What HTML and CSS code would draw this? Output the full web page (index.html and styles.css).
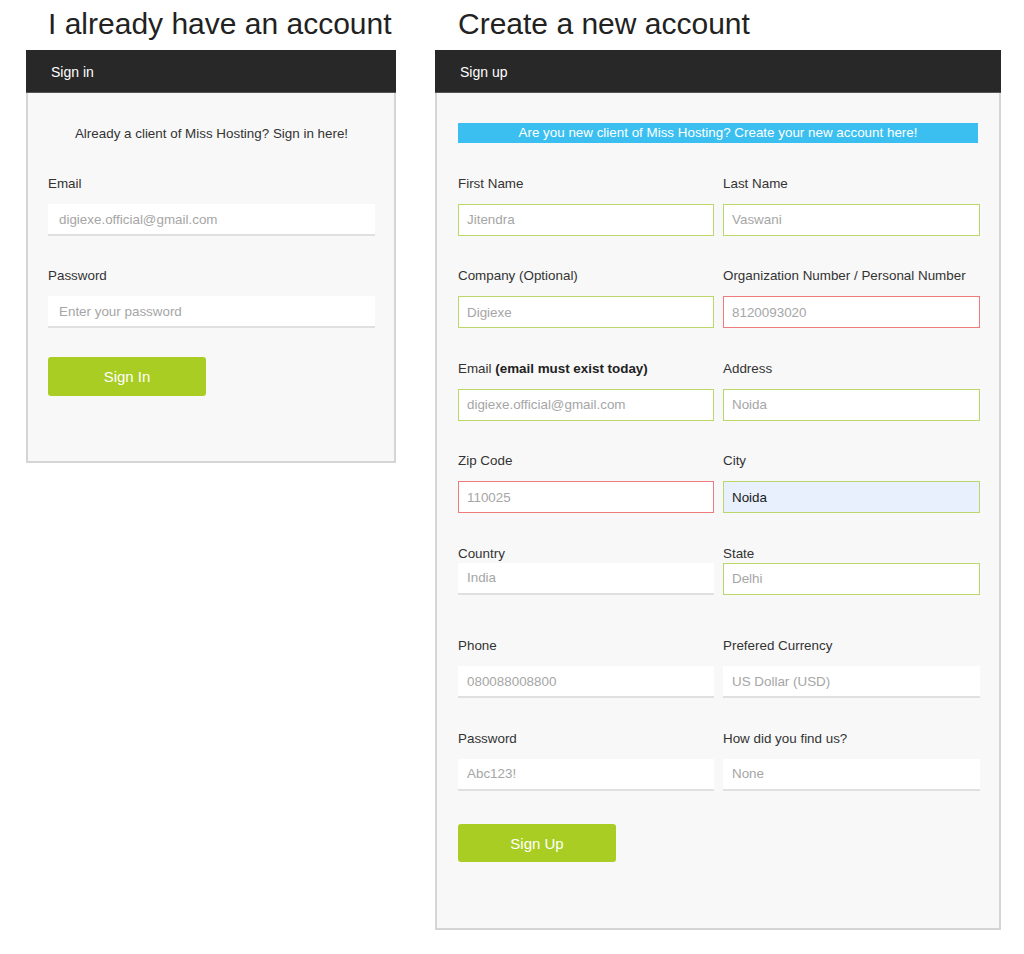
FILE: index.html
```html
<!DOCTYPE html>
<html lang="en">
<head>
<meta charset="utf-8">
<title>Account</title>
<link rel="stylesheet" href="styles.css">
</head>
<body>
<div class="page">
  <section class="col col-left">
    <h1 class="title">I already have an account</h1>
    <div class="panel">
      <div class="panel-head">Sign in</div>
      <div class="panel-body body-left">
        <p class="intro">Already a client of Miss Hosting? Sign in here!</p>
        <div class="field">
          <label class="label">Email</label>
          <input class="input plain wide-pad" type="text" placeholder="digiexe.official@gmail.com">
        </div>
        <div class="field">
          <label class="label">Password</label>
          <input class="input plain wide-pad" type="text" placeholder="Enter your password">
        </div>
        <button class="btn btn-left" type="button">Sign In</button>
      </div>
    </div>
  </section>

  <section class="col col-right">
    <h1 class="title">Create a new account</h1>
    <div class="panel">
      <div class="panel-head">Sign up</div>
      <div class="panel-body body-right">
        <div class="banner">Are you new client of Miss Hosting? Create your new account here!</div>
        <div class="grid">
          <div class="field">
            <label class="label">First Name</label>
            <input class="input ok" type="text" placeholder="Jitendra">
          </div>
          <div class="field">
            <label class="label">Last Name</label>
            <input class="input ok" type="text" placeholder="Vaswani">
          </div>
          <div class="field">
            <label class="label">Company (Optional)</label>
            <input class="input ok" type="text" placeholder="Digiexe">
          </div>
          <div class="field">
            <label class="label">Organization Number / Personal Number</label>
            <input class="input err" type="text" placeholder="8120093020">
          </div>
          <div class="field">
            <label class="label">Email <b>(email must exist today)</b></label>
            <input class="input ok" type="text" placeholder="digiexe.official@gmail.com">
          </div>
          <div class="field">
            <label class="label">Address</label>
            <input class="input ok" type="text" placeholder="Noida">
          </div>
          <div class="field">
            <label class="label">Zip Code</label>
            <input class="input err" type="text" placeholder="110025">
          </div>
          <div class="field">
            <label class="label">City</label>
            <input class="input ok filled" type="text" value="Noida">
          </div>
          <div class="field tight">
            <label class="label">Country</label>
            <input class="input plain" type="text" placeholder="India">
          </div>
          <div class="field tight">
            <label class="label">State</label>
            <input class="input ok" type="text" placeholder="Delhi">
          </div>
          <div class="field">
            <label class="label">Phone</label>
            <input class="input plain" type="text" placeholder="080088008800">
          </div>
          <div class="field">
            <label class="label">Prefered Currency</label>
            <input class="input plain" type="text" placeholder="US Dollar (USD)">
          </div>
          <div class="field">
            <label class="label">Password</label>
            <input class="input plain" type="text" placeholder="Abc123!">
          </div>
          <div class="field">
            <label class="label">How did you find us?</label>
            <input class="input plain" type="text" placeholder="None">
          </div>
        </div>
        <button class="btn btn-right" type="button">Sign Up</button>
      </div>
    </div>
  </section>
</div>
</body>
</html>
```

FILE: styles.css
```css
* { box-sizing: border-box; }

body {
  margin: 0;
  background: #ffffff;
  font-family: "Liberation Sans", Arial, Helvetica, sans-serif;
  color: #333333;
}

.page {
  display: flex;
  align-items: flex-start;
  gap: 39px;
  padding-left: 26px;
}

.col-left { width: 370px; }
.col-right { width: 566px; }

.title {
  margin: 7px 0 9px;
  font-size: 30px;
  line-height: 34px;
  font-weight: normal;
  color: #222222;
}
.col-left .title { padding-left: 22px; }
.col-right .title { padding-left: 23px; }

.panel-head {
  height: 43px;
  background: #282828;
  color: #ffffff;
  font-size: 14px;
  line-height: 44px;
  padding-left: 25px;
  border-bottom: 1px solid #555555;
}

.panel-body {
  background: #f8f8f8;
  border: 2px solid #d5d5d5;
  border-top: none;
}

.body-left {
  padding: 33px 19px 65px 20px;
}
.body-right {
  padding: 30px 19px 66px 21px;
}

.intro {
  margin: 0 0 34px;
  text-align: center;
  font-size: 13.4px;
  line-height: 16px;
  color: #333333;
}

.banner {
  height: 20px;
  margin-right: 2px;
  background: #3bbff0;
  color: #ffffff;
  font-size: 13.4px;
  line-height: 20px;
  text-align: center;
  margin-bottom: 32.5px;
}

.grid {
  display: grid;
  grid-template-columns: 256px 257px;
  column-gap: 9px;
  row-gap: 32.5px;
}

.field {
  display: flex;
  flex-direction: column;
}
.body-left .field { margin-bottom: 32px; }
.body-left .field + .field { margin-bottom: 29px; }

.label {
  font-size: 13.4px;
  line-height: 16px;
  color: #333333;
  margin-bottom: 12px;
}
.label b { color: #222222; }

.tight .label { margin-bottom: 1px; }
.tight { padding-bottom: 11px; }

.input {
  display: block;
  width: 100%;
  height: 32px;
  margin: 0;
  padding: 0 8px;
  font-family: "Liberation Sans", Arial, Helvetica, sans-serif;
  font-size: 13.4px;
  color: #222222;
  background: #ffffff;
  border: 1px solid transparent;
  border-radius: 0;
  outline: none;
}
.input::placeholder { color: #a6a6a6; opacity: 1; }

.plain {
  border: none;
  border-bottom: 2px solid #e0e0e0;
  padding-left: 9px;
}
.wide-pad { padding-left: 11px; }

.ok { border: 1px solid #bad86a; }
.err { border: 1px solid #f07b7b; }
.filled { background: #e8f0fe; color: #1a1a1a; }

.btn {
  display: block;
  width: 158px;
  height: 39px;
  border: none;
  border-radius: 3px;
  background: #a9cd22;
  color: #ffffff;
  font-family: "Liberation Sans", Arial, Helvetica, sans-serif;
  font-size: 15px;
  padding: 0;
}
.btn-right { margin-top: 33.5px; height: 38px; }
```
